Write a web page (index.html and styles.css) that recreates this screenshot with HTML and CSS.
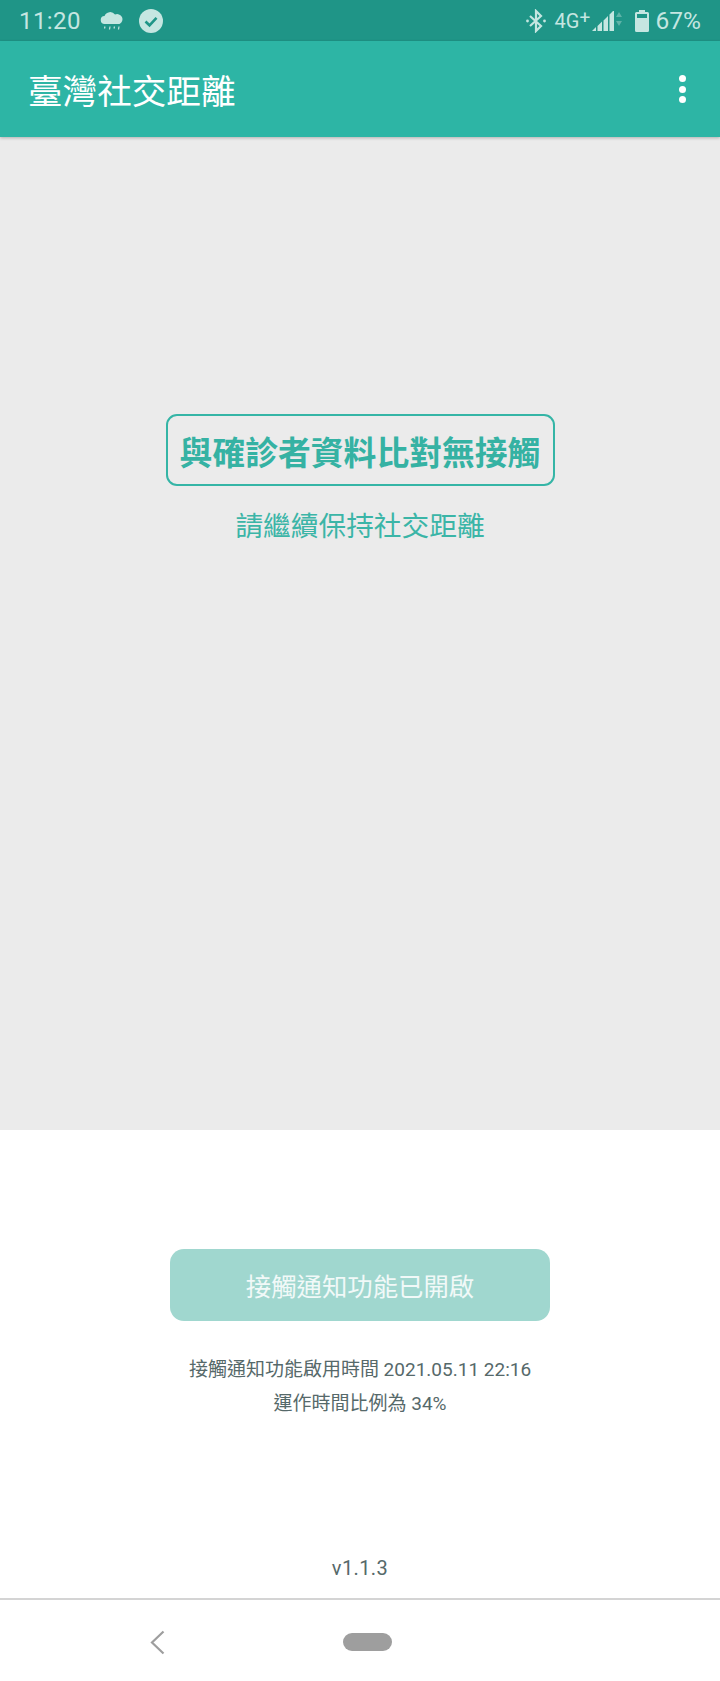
FILE: index.html

```html
<!DOCTYPE html>
<html lang="zh-TW">
<head>
    <meta charset="UTF-8">
    <title>臺灣社交距離</title>
    <link rel="stylesheet" href="styles.css">
</head>
<body>
    <div class="status">
        <span class="time">11:20</span>
        <svg class="ic-cloud" width="24" height="20" viewBox="0 0 24 20">
            <path d="M5 13a4 4 0 0 1-.5-8A6 6 0 0 1 15 3.600 4.700 4.700 0 0 1 19.500 13z" fill="#c5e6e1"/>
            <path d="M5 15.500l-.5 2M10 15.500l-.5 3M14.500 15.500l-.5 2M19 15.500l-.5 3" stroke="#c5e6e1" stroke-width="1.200" fill="none"/>
        </svg>
        <svg class="ic-check" width="24" height="24" viewBox="0 0 24 24">
            <circle cx="12" cy="12" r="12" fill="#c5e6e1"/>
            <path d="M6.500 12.500l4 3.800 7-7.500" stroke="#1f9587" stroke-width="2.600" fill="none"/>
        </svg>
        <span class="spacer"></span>
        <svg class="ic-bt" width="20" height="24" viewBox="0 0 20 24">
            <path d="M4 7l11 10-5 5V2l5 5L4 17" stroke="#c5e6e1" stroke-width="2.200" fill="none"/>
            <circle cx="1.500" cy="12" r="1.400" fill="#c5e6e1"/>
            <circle cx="18.500" cy="12" r="1.400" fill="#c5e6e1"/>
        </svg>
        <span class="net">4G<sup>+</sup></span>
        <svg class="ic-signal" width="31" height="24" viewBox="0 0 31 24">
            <path d="M0 22h4v-4zM5.500 22H10V12.500L5.500 17zM11.500 22H16V7l-4.500 4.500zM17.500 22H22V2h-1l-3.500 3.500z" fill="#c5e6e1"/>
            <path d="M27 3l3 5h-6zM27 17l-3-5h6z" fill="#5fb3a8"/>
        </svg>
        <svg class="ic-batt" width="14" height="22" viewBox="0 0 14 22">
            <path d="M4 0h6v2h2.500q1.500 0 1.500 1.500V20.500q0 1.500-1.500 1.500h-11Q0 22 0 20.500V3.500Q0 2 1.500 2H4z" fill="#c5e6e1"/>
            <rect x="2" y="4" width="10" height="4" fill="#1f9587"/>
        </svg>
        <span class="pct">67%</span>
    </div>

    <header class="appbar">
        <h1>臺灣社交距離</h1>
        <div class="menu"><i></i><i></i><i></i></div>
    </header>

    <main class="result">
        <div class="result-box">與確診者資料比對無接觸</div>
        <p class="result-sub">請繼續保持社交距離</p>
    </main>

    <section class="panel">
        <button class="btn-on">接觸通知功能已開啟</button>
        <p class="info">接觸通知功能啟用時間 2021.05.11 22:16<br>運作時間比例為 34%</p>
        <span class="version">v1.1.3</span>
    </section>

    <nav class="navbar">
        <svg class="ic-back" width="15" height="25" viewBox="0 0 15 25">
            <path d="M13.500 1.500L2 12.500l11.500 11" stroke="#9e9e9e" stroke-width="2.200" fill="none"/>
        </svg>
        <div class="pill"></div>
    </nav>
</body>
</html>
```

FILE: styles.css

```css
* { box-sizing: border-box; }
html, body { margin: 0; padding: 0; }
body {
    width: 720px;
    height: 1681px;
    display: flex;
    flex-direction: column;
    overflow: hidden;
    background: #fff;
    font-family: Roboto, "Noto Sans CJK TC", sans-serif;
}

.status {
    height: 41px;
    flex: none;
    display: flex;
    align-items: center;
    padding: 0 19px;
    background: #1f9587;
    color: #c5e6e1;
}
.time { font-size: 24px; width: 62px; letter-spacing: .4px; }
.ic-cloud { margin-left: 19px; margin-top: 1px; }
.ic-check { margin-left: 15px; }
.spacer { flex: 1; }
.ic-bt { margin-right: 9px; }
.net { font-size: 20px; width: 37px; }
.net sup { font-size: 19px; line-height: 0; vertical-align: 4px; }
.ic-batt { margin-left: 12px; }
.pct { font-size: 24.500px; margin-left: 7px; }

.appbar {
    height: 96px;
    flex: none;
    display: flex;
    align-items: center;
    justify-content: space-between;
    padding: 0 34px 0 28px;
    background: #2db5a5;
    box-shadow: 0 1px 3px rgba(0,0,0,.25);
    position: relative;
}
.appbar h1 {
    margin: 0;
    font-size: 34.600px;
    font-weight: 400;
    color: #fff;
}
.menu { display: flex; flex-direction: column; gap: 3.500px; }
.menu i { width: 7px; height: 7px; border-radius: 50%; background: #fff; }

.result {
    height: 993px;
    flex: none;
    display: flex;
    flex-direction: column;
    align-items: center;
    padding-top: 277px;
    background: #ebebeb;
}
.result-box {
    width: 389px;
    height: 72px;
    display: flex;
    align-items: center;
    justify-content: center;
    border: 2px solid #35b5a6;
    border-radius: 11px;
    font-size: 32.800px;
    font-weight: 700;
    color: #35b2a3;
    white-space: nowrap;
}
.result-sub {
    margin: 21px 0 0;
    font-size: 27.700px;
    line-height: 40px;
    color: #3bb5a7;
}

.panel {
    flex: 1;
    display: flex;
    flex-direction: column;
    align-items: center;
    padding-top: 119px;
    border-bottom: 2px solid #d4d4d4;
}
.btn-on {
    width: 380px;
    height: 72px;
    border: 0;
    border-radius: 14px;
    background: #a0d7cf;
    color: #f1f9f8;
    font-family: inherit;
    font-size: 25.400px;
}
.info {
    margin: 32px 0 0;
    font-size: 19px;
    line-height: 34px;
    color: #56696a;
    text-align: center;
}
.version {
    margin-top: auto;
    margin-bottom: 18px;
    font-size: 20px;
    letter-spacing: .4px;
    color: #56696a;
}

.navbar {
    height: 81px;
    flex: none;
    display: flex;
    align-items: center;
    padding: 3px 0 0 150px;
}
.pill {
    width: 49px;
    height: 18px;
    margin-left: 178px;
    border-radius: 9px;
    background: #9e9e9e;
}
```
